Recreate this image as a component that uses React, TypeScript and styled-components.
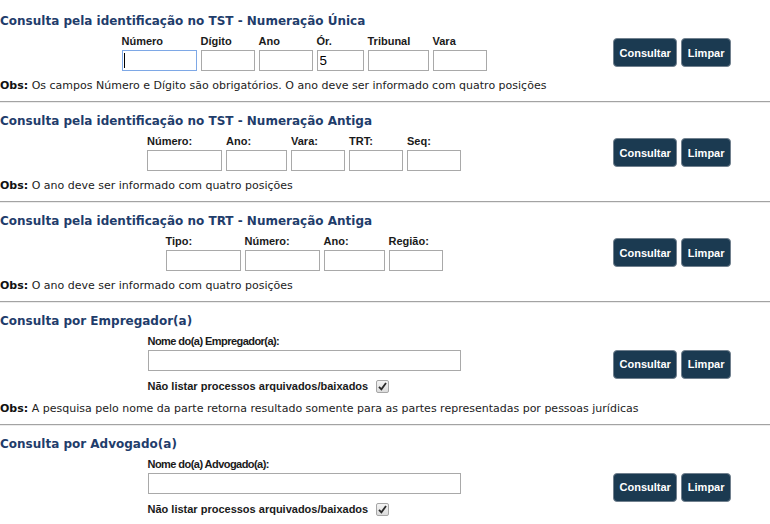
import React from "react";
import styled, { createGlobalStyle } from "styled-components";

const GlobalStyle = createGlobalStyle`
  html, body { margin: 0; padding: 0; background: #fff; }
  body { font-family: "DejaVu Sans", Verdana, sans-serif; color: #222; }
`;

const Page = styled.div`
  width: 770px;
`;

const Section = styled.section<{ $first?: boolean }>`
  padding: ${(p) => (p.$first ? "13px" : "10px")} 0 8px;
`;

const Divider = styled.div`
  height: 0;
  border-top: 1px solid #a3a3a3;
  border-bottom: 1px solid #ececec;
`;

const Title = styled.h2`
  margin: 0;
  font-family: "DejaVu Sans", Verdana, sans-serif;
  font-size: 12px;
  font-weight: bold;
  line-height: 16px;
  color: #1f3d6b;
`;

const Row = styled.div`
  display: flex;
  align-items: center;
  margin-top: 5px;
`;

const FieldArea = styled.div`
  width: 608px;
  display: flex;
  flex-direction: column;
  align-items: center;
`;

const Fields = styled.div`
  display: flex;
  gap: 4px;
`;

const Field = styled.div`
  display: flex;
  flex-direction: column;
  gap: 2px;
`;

const Label = styled.label<{ $narrow?: boolean }>`
  font-family: "Liberation Sans", Arial, sans-serif;
  font-size: 11px;
  font-weight: bold;
  line-height: 14px;
  color: #1a1a1a;
  letter-spacing: ${(p) => (p.$narrow ? "-0.55px" : "0")};
`;

const InputWrap = styled.div`
  position: relative;
`;

const TextInput = styled.input<{ $w: number; $active?: boolean }>`
  box-sizing: border-box;
  width: ${(p) => p.$w}px;
  height: 21px;
  margin: 0;
  padding: 1px 2px;
  border: 1px solid ${(p) => (p.$active ? "#7ea8e6" : "#a9a9a9")};
  border-radius: 0;
  font-family: "Liberation Sans", Arial, sans-serif;
  font-size: 13.33px;
  color: #000;
  background: #fff;
  outline: none;
`;

const Caret = styled.span`
  position: absolute;
  left: 2px;
  top: 3px;
  width: 1px;
  height: 15px;
  background: #000;
`;

const CheckRow = styled.div`
  display: flex;
  align-items: center;
  gap: 8px;
  margin-top: 5px;
  height: 16px;
  font-family: "Liberation Sans", Arial, sans-serif;
  font-size: 11px;
  font-weight: bold;
  color: #1a1a1a;
`;

const CheckBox = styled.span`
  display: inline-flex;
  width: 13px;
  height: 13px;
  box-sizing: border-box;
  border: 1px solid #a6a6a6;
  border-radius: 2px;
  background: linear-gradient(#f4f4f4, #dcdcdc);
  align-items: center;
  justify-content: center;
`;

const Buttons = styled.div`
  display: flex;
  gap: 4px;
  margin-left: 5px;
`;

const Button = styled.button`
  height: 29px;
  padding: 0 5.5px;
  border: 1px solid #71808e;
  border-radius: 4px;
  background: #1b3a51;
  color: #fff;
  font-family: "Liberation Sans", Arial, sans-serif;
  font-size: 11px;
  font-weight: bold;
  cursor: pointer;
`;

const Obs = styled.p`
  margin: 8px 0 0;
  font-family: "DejaVu Sans", Verdana, sans-serif;
  font-size: 11px;
  line-height: 14px;
  color: #222;
  b { color: #111; }
`;

type F = { label: string; w: number; value?: string; active?: boolean };

const FieldSet = ({ fields }: { fields: F[] }) => (
  <Fields>
    {fields.map((f) => (
      <Field key={f.label}>
        <Label>{f.label}</Label>
        <InputWrap>
          <TextInput $w={f.w} $active={f.active} defaultValue={f.value ?? ""} />
          {f.active && <Caret />}
        </InputWrap>
      </Field>
    ))}
  </Fields>
);

const ActionButtons = () => (
  <Buttons>
    <Button>Consultar</Button>
    <Button>Limpar</Button>
  </Buttons>
);

const Check = () => (
  <CheckBox>
    <svg width="9" height="9" viewBox="0 0 9 9">
      <path d="M1 4.8 L3.4 7.4 L8 1" stroke="#2a2a2a" strokeWidth="1.8" fill="none" />
    </svg>
  </CheckBox>
);

const NameSearch = ({ label }: { label: string }) => (
  <Field>
    <Label $narrow>{label}</Label>
    <TextInput $w={313} />
    <CheckRow>
      Não listar processos arquivados/baixados
      <Check />
    </CheckRow>
  </Field>
);

const AnoObs = () => (
  <Obs>
    <b>Obs:</b> O ano deve ser informado com quatro posições
  </Obs>
);

export default function App() {
  return (
    <Page>
      <GlobalStyle />
      <Section $first>
        <Title>Consulta pela identificação no TST - Numeração Única</Title>
        <Row>
          <FieldArea>
            <FieldSet
              fields={[
                { label: "Número", w: 75, active: true },
                { label: "Dígito", w: 54 },
                { label: "Ano", w: 54 },
                { label: "Ór.", w: 47, value: "5" },
                { label: "Tribunal", w: 61 },
                { label: "Vara", w: 54 },
              ]}
            />
          </FieldArea>
          <ActionButtons />
        </Row>
        <Obs>
          <b>Obs:</b> Os campos Número e Dígito são obrigatórios. O ano deve ser informado com quatro posições
        </Obs>
      </Section>
      <Divider />
      <Section>
        <Title>Consulta pela identificação no TST - Numeração Antiga</Title>
        <Row>
          <FieldArea>
            <FieldSet
              fields={[
                { label: "Número:", w: 75 },
                { label: "Ano:", w: 61 },
                { label: "Vara:", w: 54 },
                { label: "TRT:", w: 54 },
                { label: "Seq:", w: 54 },
              ]}
            />
          </FieldArea>
          <ActionButtons />
        </Row>
        <AnoObs />
      </Section>
      <Divider />
      <Section>
        <Title>Consulta pela identificação no TRT - Numeração Antiga</Title>
        <Row>
          <FieldArea>
            <FieldSet
              fields={[
                { label: "Tipo:", w: 75 },
                { label: "Número:", w: 75 },
                { label: "Ano:", w: 61 },
                { label: "Região:", w: 54 },
              ]}
            />
          </FieldArea>
          <ActionButtons />
        </Row>
        <AnoObs />
      </Section>
      <Divider />
      <Section>
        <Title>Consulta por Empregador(a)</Title>
        <Row>
          <FieldArea>
            <NameSearch label="Nome do(a) Empregador(a):" />
          </FieldArea>
          <ActionButtons />
        </Row>
        <Obs>
          <b>Obs:</b> A pesquisa pelo nome da parte retorna resultado somente para as partes representadas por pessoas jurídicas
        </Obs>
      </Section>
      <Divider />
      <Section>
        <Title>Consulta por Advogado(a)</Title>
        <Row>
          <FieldArea>
            <NameSearch label="Nome do(a) Advogado(a):" />
          </FieldArea>
          <ActionButtons />
        </Row>
      </Section>
    </Page>
  );
}
